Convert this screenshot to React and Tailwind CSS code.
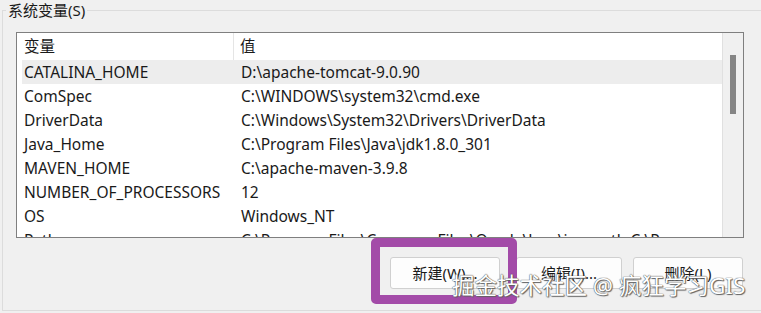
const rows = [
  { name: 'CATALINA_HOME', value: 'D:\\apache-tomcat-9.0.90', selected: true },
  { name: 'ComSpec', value: 'C:\\WINDOWS\\system32\\cmd.exe' },
  { name: 'DriverData', value: 'C:\\Windows\\System32\\Drivers\\DriverData' },
  { name: 'Java_Home', value: 'C:\\Program Files\\Java\\jdk1.8.0_301' },
  { name: 'MAVEN_HOME', value: 'C:\\apache-maven-3.9.8' },
  { name: 'NUMBER_OF_PROCESSORS', value: '12' },
  { name: 'OS', value: 'Windows_NT' },
  { name: 'Path', value: 'C:\\Program Files\\Common Files\\Oracle\\Java\\javapath;C:\\P' },
];

const font = "font-['Noto_Sans','Noto_Sans_CJK_SC',sans-serif]";

const App = () => {
  return (
    <div className={`relative w-[761px] h-[313px] overflow-hidden bg-[#f0f0f0] text-[#1a1a1a] ${font}`}>
      {/* group box */}
      <div className="absolute left-[2px] top-[10px] right-[-4px] h-[301px] border border-[#dcdcdc]"></div>
      <div className="relative h-[20px] pl-[6px] text-[15px] leading-[20px] flex">
        <span className="bg-[#f0f0f0] px-[2px] leading-[20px]">系统变量(S)</span>
      </div>

      {/* list view */}
      <div className="relative ml-[16px] mt-[12px] w-[728px] h-[206px] border border-[#7f7f7f] bg-white flex overflow-hidden">
        <div className="flex-1 flex flex-col">
          <div className="flex h-[27px] items-center text-[15.5px] shrink-0">
            <div className="w-[217px] pl-[7px] border-r border-[#e5e5e5] h-full flex items-center">变量</div>
            <div className="pl-[6px]">值</div>
          </div>
          {rows.map((r) => (
            <div
              key={r.name}
              className={`flex h-[24px] leading-[24px] items-center text-[15.5px] whitespace-nowrap shrink-0 ml-[5px] ${r.selected ? 'bg-[#ededed]' : ''}`}
            >
              <div className="w-[219px] pl-[2px]">{r.name}</div>
              <div>{r.value}</div>
            </div>
          ))}
        </div>
        <div className="w-[21px] shrink-0 bg-[#f0f0f0] border-l border-[#e0e0e0] flex justify-center pt-[22px]">
          <div className="w-[6px] h-[59px] bg-[#858585]"></div>
        </div>
      </div>

      {/* buttons */}
      <div className="relative flex mt-[19px] pl-[390px]">
        <button className="w-[110px] h-[32px] rounded-[3px] border border-[#d0d0d0] bg-[#fdfdfd] text-[15px] leading-[20px] text-[#1a1a1a]">
          新建(W)...
        </button>
        <button className="ml-[16px] w-[106px] h-[32px] rounded-[3px] border border-[#d0d0d0] bg-[#fdfdfd] text-[15px] leading-[20px] text-[#1a1a1a]">
          编辑(I)...
        </button>
        <button className="ml-[11px] w-[110px] h-[32px] rounded-[3px] border border-[#d0d0d0] bg-[#fdfdfd] text-[15px] leading-[20px] text-[#1a1a1a]">
          删除(L)
        </button>
      </div>

      {/* annotation box */}
      <div className="absolute left-[371px] top-[238px] w-[146px] h-[66px] border-[9px] border-[#a34ba8] rounded-[5px]"></div>

      {/* watermark */}
      <div className="absolute left-[452px] top-[270px] text-[22.5px] leading-[32px] text-white whitespace-nowrap [text-shadow:0_0_1px_#555,0_0_1px_#555,1px_1px_1px_#666]">
        掘金技术社区 @ 疯狂学习GIS
      </div>
    </div>
  );
};

export default App;
